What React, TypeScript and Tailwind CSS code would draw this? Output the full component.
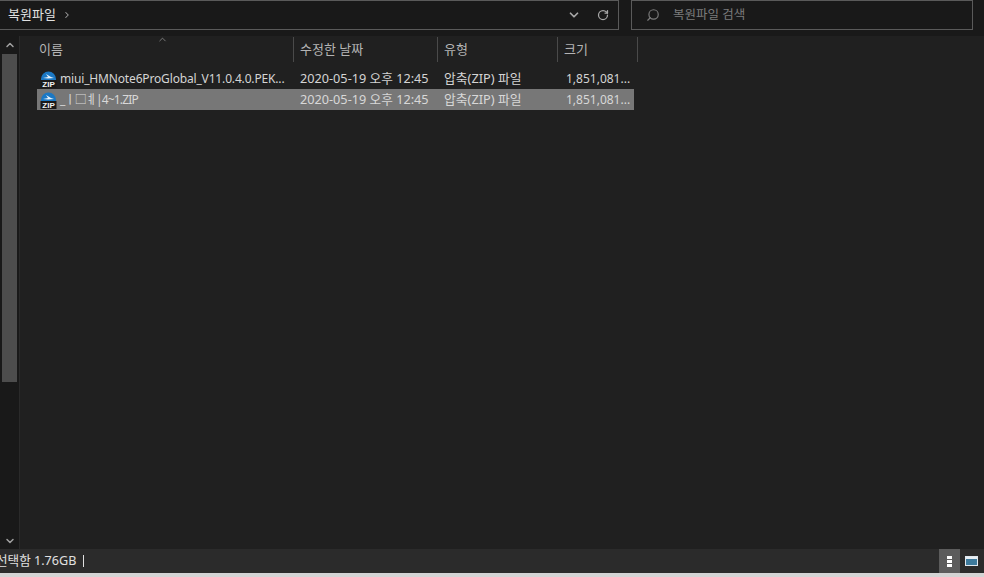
import { ChevronDown, ChevronRight, ChevronUp, RotateCw, Search } from "lucide-react";

const fontStack = "font-['Noto_Sans','Noto_Sans_CJK_KR',sans-serif]";

const columns = [
  { name: "수정한 날짜", width: "w-[144px]" },
  { name: "유형", width: "w-[120px]" },
  { name: "크기", width: "w-[80px]" },
];

const files = [
  { name: "miui_HMNote6ProGlobal_V11.0.4.0.PEK...", selected: false },
  { name: "_ㅣ□ㅖ|4~1.ZIP", selected: true },
];

const ZipIcon = () => (
  <svg width="17" height="18" viewBox="0 0 17 18" className="shrink-0">
    <path d="M1 9a7.5 7.5 0 0 1 15 0v1H1z" fill="#1b78c4" />
    <path d="M3 8l5-1-2-3 5 3 3 1-6 .5z" fill="#e8f2fb" />
    <rect x="0.5" y="10" width="16" height="8" fill="#1a1a1a" />
    <text x="8.5" y="17" textAnchor="middle" fontSize="8" fontWeight="700" fill="#f2f2f2" fontFamily="Liberation Sans, sans-serif">
      ZIP
    </text>
  </svg>
);

const FileRow = ({ name, selected }: { name: string; selected: boolean }) => (
  <div className={`flex h-[21px] w-[597px] items-center ${selected ? "bg-[#777777] text-[#d8d8d8]" : "text-[#d4d4d4]"}`}>
    <div className="flex w-[263px] items-center pl-[3px]">
      <ZipIcon />
      <span className={`ml-[3px] whitespace-nowrap text-[12px] ${selected ? "tracking-[-0.85px]" : "tracking-[-0.16px]"}`}>{name}</span>
    </div>
    <span className="w-[144px] whitespace-nowrap text-[12.7px]">2020-05-19 오후 12:45</span>
    <span className="w-[122px] whitespace-nowrap text-[12.8px]">압축(ZIP) 파일</span>
    <span className="whitespace-nowrap text-[12px]">1,851,081...</span>
  </div>
);

export default function App() {
  return (
    <div className={`flex h-[577px] w-[984px] flex-col overflow-hidden bg-[#202020] text-[13px] ${fontStack}`}>
      <div className="flex h-[36px] shrink-0 items-start bg-[#191919]">
        <div className="flex h-[30px] w-[619px] items-center justify-between border-y border-r border-[#5a5a5a] pl-[8px] pr-[9px] text-[#e0e0e0]">
          <div className="flex items-center gap-[6px]">
            <span>복원파일</span>
            <ChevronRight size={10} strokeWidth={2.5} className="text-[#a0a0a0]" />
          </div>
          <div className="flex items-center gap-[16px] text-[#a8a8a8]">
            <ChevronDown size={14} strokeWidth={3} />
            <RotateCw size={12} strokeWidth={2.5} />
          </div>
        </div>
        <div className="ml-[12px] flex h-[30px] w-[342px] items-center gap-[13px] border-x border-y border-[#5a5a5a] pl-[14px] text-[#7c7c7c]">
          <Search size={14} className="-scale-x-100" />
          <span className="text-[12.5px]">복원파일 검색</span>
        </div>
      </div>

      <div className="flex min-h-0 flex-1">
        <div className="flex w-[20px] shrink-0 flex-col items-center border-r border-[#2a2a2a] bg-[#191919] pt-[3px] text-[#a0a0a0]">
          <ChevronUp size={12} strokeWidth={3} />
          <div className="mt-[3px] h-[328px] w-[15px] bg-[#4d4d4d]" />
          <ChevronDown size={12} strokeWidth={3} className="mt-auto mb-[2px]" />
        </div>

        <div className="relative flex-1 pl-[16px] text-[#d4d4d4]">
          <ChevronUp size={11} strokeWidth={1.5} className="absolute top-[-2px] left-[137px] text-[#a0a0a0]" />
          <div className="flex h-[26px] items-center pt-[1px] text-[#b4b4b4]">
            <div className="flex h-full w-[258px] items-center border-r border-[#4a4a4a] pl-[3px]">이름</div>
            {columns.map((col) => (
              <div key={col.name} className={`flex h-full items-center border-r border-[#4a4a4a] pl-[6px] ${col.width}`}>
                {col.name}
              </div>
            ))}
          </div>
          <div className="mt-[6px] flex flex-col pl-[1px]">
            {files.map((file) => (
              <FileRow key={file.name} name={file.name} selected={file.selected} />
            ))}
          </div>
        </div>
      </div>

      <div className="flex h-[24px] shrink-0 items-center justify-between bg-[#2b2b2b] text-[#e0e0e0]">
        <div className="flex items-center">
          <span className="ml-[-4px] whitespace-nowrap text-[12.6px]">선택함 1.76GB</span>
          <span className="ml-[7px] h-[12px] w-px bg-[#e0e0e0]" />
        </div>
        <div className="flex h-full items-center">
          <div className="flex h-full w-[21px] flex-col items-center justify-center gap-px bg-[#5c5c5c]">
            <span className="h-[3px] w-[5px] bg-white" />
            <span className="h-[3px] w-[5px] bg-white" />
            <span className="h-[3px] w-[5px] bg-white" />
          </div>
          <div className="mx-[6px] ml-[5px] flex h-[10px] w-[13px] flex-col border border-[#dfe7ee] bg-[#e6eef4]">
            <span className="mt-[2px] h-full w-full bg-[#3d7a9c]" />
          </div>
        </div>
      </div>
      <div className="h-[4px] shrink-0 bg-[#d4d4d4]" />
    </div>
  );
}
